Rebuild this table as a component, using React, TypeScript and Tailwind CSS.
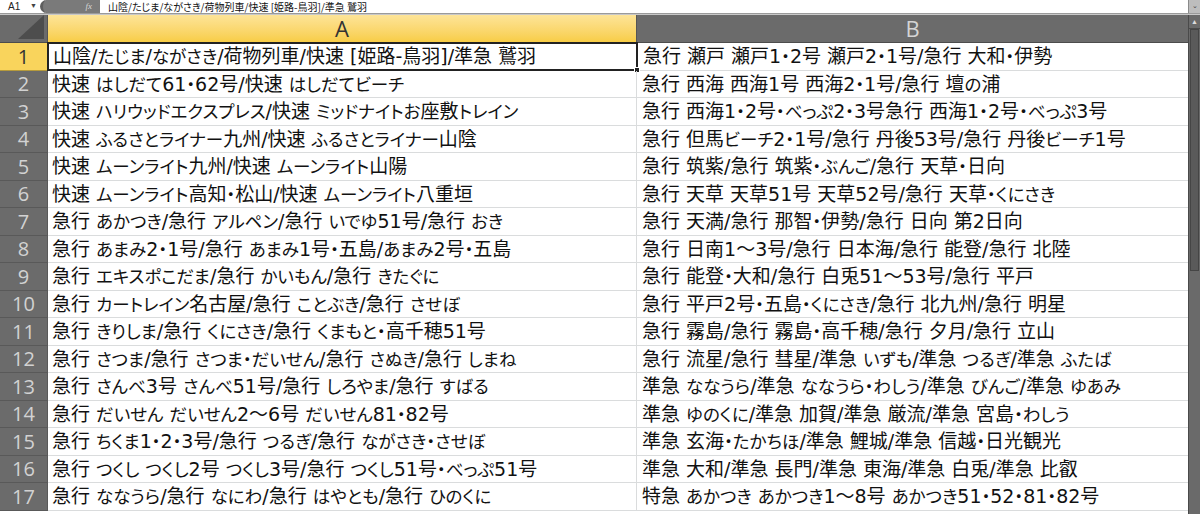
import React from "react";

const colA = [
  "山陰/たじま/ながさき/荷物列車/快速 [姫路-鳥羽]/準急 鷲羽",
  "快速 はしだて61・62号/快速 はしだてビーチ",
  "快速 ハリウッドエクスプレス/快速 ミッドナイトお座敷トレイン",
  "快速 ふるさとライナー九州/快速 ふるさとライナー山陰",
  "快速 ムーンライト九州/快速 ムーンライト山陽",
  "快速 ムーンライト高知・松山/快速 ムーンライト八重垣",
  "急行 あかつき/急行 アルペン/急行 いでゆ51号/急行 おき",
  "急行 あまみ2・1号/急行 あまみ1号・五島/あまみ2号・五島",
  "急行 エキスポこだま/急行 かいもん/急行 きたぐに",
  "急行 カートレイン名古屋/急行 ことぶき/急行 させぼ",
  "急行 きりしま/急行 くにさき/急行 くまもと・高千穂51号",
  "急行 さつま/急行 さつま・だいせん/急行 さぬき/急行 しまね",
  "急行 さんべ3号 さんべ51号/急行 しろやま/急行 すばる",
  "急行 だいせん だいせん2～6号 だいせん81・82号",
  "急行 ちくま1・2・3号/急行 つるぎ/急行 ながさき・させぼ",
  "急行 つくし つくし2号 つくし3号/急行 つくし51号・べっぷ51号",
  "急行 ななうら/急行 なにわ/急行 はやとも/急行 ひのくに",
];

const colB = [
  "急行 瀬戸 瀬戸1・2号 瀬戸2・1号/急行 大和・伊勢",
  "急行 西海 西海1号 西海2・1号/急行 壇の浦",
  "急行 西海1・2号・べっぷ2・3号急行 西海1・2号・べっぷ3号",
  "急行 但馬ビーチ2・1号/急行 丹後53号/急行 丹後ビーチ1号",
  "急行 筑紫/急行 筑紫・ぶんご/急行 天草・日向",
  "急行 天草 天草51号 天草52号/急行 天草・くにさき",
  "急行 天満/急行 那智・伊勢/急行 日向 第2日向",
  "急行 日南1～3号/急行 日本海/急行 能登/急行 北陸",
  "急行 能登・大和/急行 白兎51～53号/急行 平戸",
  "急行 平戸2号・五島・くにさき/急行 北九州/急行 明星",
  "急行 霧島/急行 霧島・高千穂/急行 夕月/急行 立山",
  "急行 流星/急行 彗星/準急 いずも/準急 つるぎ/準急 ふたば",
  "準急 ななうら/準急 ななうら・わしう/準急 びんご/準急 ゆあみ",
  "準急 ゆのくに/準急 加賀/準急 厳流/準急 宮島・わしう",
  "準急 玄海・たかちほ/準急 鯉城/準急 信越・日光観光",
  "準急 大和/準急 長門/準急 東海/準急 白兎/準急 比叡",
  "特急 あかつき あかつき1～8号 あかつき51・52・81・82号",
];

const heights = [
  "h-[28px]",
  "h-[27px]",
  "h-[28px]",
  "h-[27px]",
  "h-[28px]",
  "h-[27px]",
  "h-[28px]",
  "h-[27px]",
  "h-[28px]",
  "h-[27px]",
  "h-[28px]",
  "h-[27px]",
  "h-[28px]",
  "h-[27px]",
  "h-[28px]",
  "h-[27px]",
  "h-[28px]",
];

const jp = "[font-family:'Noto_Sans_CJK_JP',sans-serif] [font-feature-settings:'palt']";
const cellText =
  "text-[19px] text-[#111] whitespace-nowrap overflow-hidden [font-family:'DejaVu_Sans','Noto_Sans_CJK_JP',sans-serif] [font-feature-settings:'palt']";

function Runs({ text }: { text: string }) {
  const parts = text.split(/([\u3040-\u30FF]+)/);
  return (
    <span>
      {parts.map((p, i) =>
        /^[\u3040-\u30FF]+$/.test(p) ? (
          <span key={i} className="text-[17.5px]">
            {p}
          </span>
        ) : (
          <React.Fragment key={i}>{p}</React.Fragment>
        )
      )}
    </span>
  );
}

export default function App() {
  return (
    <div className="w-[1200px] h-[514px] overflow-hidden bg-white flex flex-col">
      {/* Formula bar */}
      <div className="h-[14px] flex items-stretch bg-white border-b border-[#9a9a9a]">
        <div className="w-[40px] flex items-center justify-between pl-[8px] pr-[3px] text-[10px] text-[#222] [font-family:'Liberation_Sans',sans-serif]">
          <span>A1</span>
          <span className="text-[7px] text-[#444]">▼</span>
        </div>
        <div className="w-[60px] flex items-center justify-end bg-[#7a7a7a] rounded-l-full pr-[8px] border-l-[3px] border-[#5e5e5e]">
          <span className="text-[9px] italic text-[#d8d8d8] [font-family:'Liberation_Serif',serif]">fx</span>
        </div>
        <div className={`flex-1 flex items-center pl-[8px] text-[10px] text-[#111] ${jp}`}>
          山陰/たじま/ながさき/荷物列車/快速 [姫路-鳥羽]/準急 鷲羽
        </div>
        <div className="w-[12px] bg-[#bdbdbd] border-l border-[#8a8a8a] flex items-center justify-center text-[7px] text-[#444]">
          ⌄
        </div>
      </div>
      <div className="h-[1px] bg-[#c8c8c8]" />
      {/* Body */}
      <div className="flex-1 flex">
        <div className="flex-1 flex flex-col">
          {/* column headers */}
          <div className="h-[28px] flex border-b border-[#4c4c4c]">
            <div className="w-[48px] bg-[#6b6b6b] border-r border-[#555] relative overflow-hidden">
              <svg className="absolute right-[3px] bottom-[3px]" width="26" height="24" viewBox="0 0 26 24">
                <polygon points="26,0 26,24 0,24" fill="#4d4d4d" />
              </svg>
            </div>
            <div className="w-[589px] bg-gradient-to-b from-[#fde497] to-[#f8cd45] border-r border-[#555] flex items-center justify-center text-[22px] text-[#333] [font-family:'Open_Sans',sans-serif]">
              A
            </div>
            <div className="flex-1 bg-[#6b6b6b] flex items-center justify-center text-[22px] text-[#d4d4d4] [font-family:'Open_Sans',sans-serif]">
              B
            </div>
          </div>
          {/* rows */}
          {colA.map((a, i) => (
            <div key={i} className={`${heights[i]} flex shrink-0`}>
              <div
                className={`w-[48px] flex items-center justify-center text-[20px] border-b border-r [font-family:'Open_Sans',sans-serif] ${
                  i === 0
                    ? "bg-[#f9d45c] text-[#333] border-[#b59a3c]"
                    : "bg-[#6b6b6b] text-[#d2d2d2] border-[#595959]"
                }`}
              >
                {i + 1}
              </div>
              <div
                className={`w-[589px] flex items-center pl-[4px] relative ${cellText} ${
                  i === 0 ? "border-2 border-[#222] -ml-[1px] -mt-[1px] w-[591px] overflow-visible" : "border-b border-r border-[#dadcdd]"
                }`}
              >
                <Runs text={a} />
                {i === 0 && (
                  <span className="absolute right-[-4px] bottom-[-4px] w-[6px] h-[6px] bg-[#222] border border-white" />
                )}
              </div>
              <div className={`flex-1 flex items-center pl-[5px] border-b border-[#dadcdd] ${cellText}`}>
                <Runs text={colB[i]} />
              </div>
            </div>
          ))}
        </div>
        {/* scrollbar */}
        <div className="w-[12px] bg-[#6a6a6a] border-l border-[#4a4a4a] flex flex-col">
          <div className="h-[14px] flex items-start justify-center text-[7px] text-[#ddd] pt-[2px] border-b border-[#4a4a4a]">
            ▲
          </div>
          <div className="h-[242px] bg-[#5a5a5a] border border-[#454545] mx-[1px]" />
          <div className="flex-1" />
        </div>
      </div>
    </div>
  );
}
